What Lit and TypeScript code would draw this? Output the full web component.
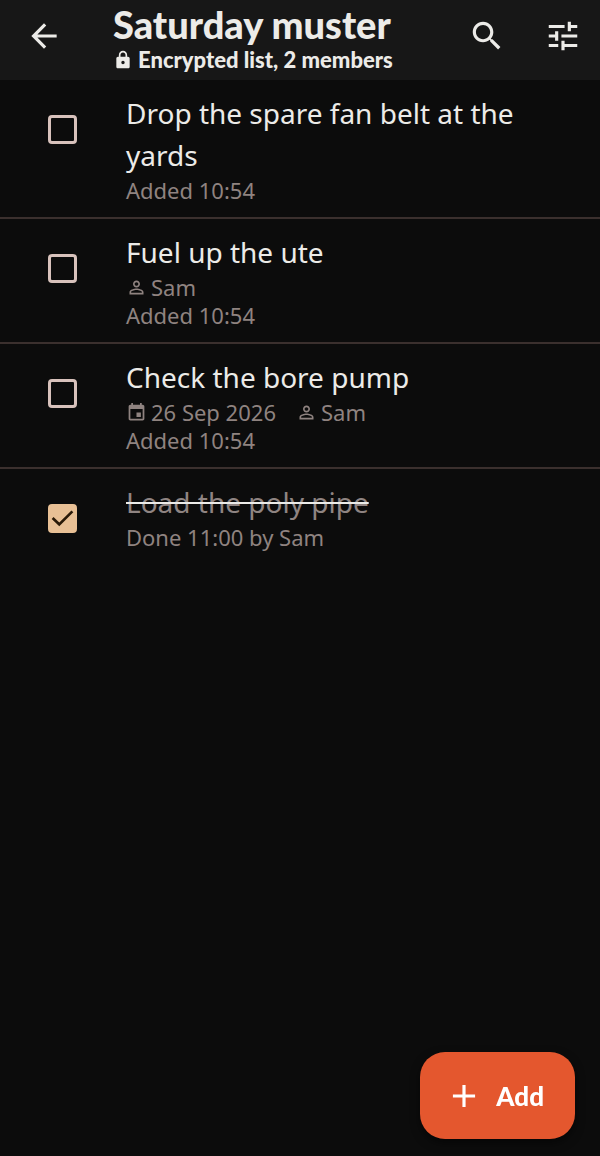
import { LitElement, html, css, svg, nothing } from "lit";
import { customElement, property } from "lit/decorators.js";

const paths = {
  back: "M20 11H7.83l5.59-5.59L12 4l-8 8 8 8 1.41-1.41L7.83 13H20v-2z",
  lock: "M18 8h-1V6c0-2.76-2.24-5-5-5S7 3.24 7 6v2H6c-1.1 0-2 .9-2 2v10c0 1.1.9 2 2 2h12c1.1 0 2-.9 2-2V10c0-1.1-.9-2-2-2zm-6 9c-1.1 0-2-.9-2-2s.9-2 2-2 2 .9 2 2-.9 2-2 2zM9 8V6c0-1.66 1.34-3 3-3s3 1.34 3 3v2H9z",
  search: "M15.5 14h-.79l-.28-.27C15.41 12.59 16 11.11 16 9.5 16 5.91 13.09 3 9.5 3S3 5.91 3 9.5 5.91 16 9.5 16c1.61 0 3.09-.59 4.23-1.57l.27.28v.79l5 4.99L20.49 19l-4.99-5zm-6 0C7.01 14 5 11.99 5 9.5S7.01 5 9.5 5 14 7.01 14 9.5 11.99 14 9.5 14z",
  tune: "M3 17v2h6v-2H3zM3 5v2h10V5H3zm10 16v-2h8v-2h-8v-2h-2v6h2zM7 9v2H3v2h4v2h2V9H7zm14 4v-2H11v2h10zm-6-4h2V7h4V5h-4V3h-2v6z",
  person: "M12 5.9c1.16 0 2.1.94 2.1 2.1s-.94 2.1-2.1 2.1S9.9 9.16 9.9 8s.94-2.1 2.1-2.1m0 9c2.97 0 6.1 1.46 6.1 2.1v1.1H5.9V17c0-.64 3.13-2.1 6.1-2.1M12 4C9.79 4 8 5.79 8 8s1.79 4 4 4 4-1.79 4-4-1.79-4-4-4zm0 9c-2.67 0-8 1.34-8 4v3h16v-3c0-2.66-5.33-4-8-4z",
  event: "M17 12h-5v5h5v-5zM16 1v2H8V1H6v2H5c-1.11 0-1.99.9-1.99 2L3 19c0 1.1.89 2 2 2h14c1.1 0 2-.9 2-2V5c0-1.1-.9-2-2-2h-1V1h-2zm3 18H5V8h14v11z",
  plus: "M19 13h-6v6h-2v-6H5v-2h6V5h2v6h6v2z",
};
type IconName = keyof typeof paths;

@customElement("ui-icon")
class UiIcon extends LitElement {
  static styles = css`
    :host { display: inline-flex; flex: none; width: 38px; height: 38px; }
    .glyph { width: 100%; height: 100%; fill: currentColor; }
  `;
  @property() name: IconName = "plus";
  render() {
    return html`<svg class="glyph" viewBox="0 0 24 24" aria-hidden="true">${svg`<path d=${paths[this.name]} />`}</svg>`;
  }
}

interface Task {
  id: string;
  title: string;
  due?: string;
  assignee?: string;
  status: string;
  done?: boolean;
}

@customElement("task-row")
class TaskRow extends LitElement {
  static styles = css`
    :host { display: block; }
    .row { display: flex; align-items: flex-start; gap: 49px; padding: 12px 49px 13px 48px; }
    .box {
      appearance: none; flex: none; box-sizing: border-box;
      display: grid; place-content: center;
      width: 29px; height: 29px; margin: 23px 0 0;
      border: 3px solid #d8c2bc; border-radius: 4px;
    }
    .box:checked { border-color: #e8c095; background: #e8c095; }
    .box:checked::before {
      content: ""; width: 23px; height: 23px; background: #2a1a08;
      clip-path: polygon(3% 52%, 11% 43%, 36% 67%, 89% 15%, 97% 23%, 36% 84%);
    }
    .body { flex: 1; min-width: 0; }
    .title { display: block; font-size: 28px; line-height: 42px; color: #ecebe8; }
    .title.done { color: #8f8482; text-decoration: line-through #ecebe8 2px; }
    .meta { display: flex; gap: 20px; margin: 0; font-size: 22px; line-height: 28px; color: #8f8380; }
    .item { display: flex; align-items: center; gap: 4px; }
    .small { width: 21px; height: 21px; }
  `;
  @property({ attribute: false }) task!: Task;
  render() {
    const t = this.task;
    return html`
      <div class="row">
        <input class="box" type="checkbox" id=${t.id} .checked=${!!t.done} />
        <div class="body">
          <label class="title ${t.done ? "done" : ""}" for=${t.id}>${t.title}</label>
          ${t.due || t.assignee
            ? html`<p class="meta">
                ${t.due ? html`<span class="item"><ui-icon class="small" name="event"></ui-icon>${t.due}</span>` : nothing}
                ${t.assignee ? html`<span class="item"><ui-icon class="small" name="person"></ui-icon>${t.assignee}</span>` : nothing}
              </p>`
            : nothing}
          <p class="meta">${t.status}</p>
        </div>
      </div>
    `;
  }
}

@customElement("app-root")
class AppRoot extends LitElement {
  static styles = css`
    :host {
      display: block; min-height: 100vh; background: #0c0c0c; color: #ecebe8;
      font-family: "Noto Sans", sans-serif;
    }
    .bar {
      display: flex; align-items: center; box-sizing: border-box; height: 80px;
      padding: 0 18px 8px 25px; background: #171717;
      font-family: Lato, sans-serif; font-weight: 900;
    }
    .tool {
      display: inline-flex; padding: 0; border: 0; background: none; color: inherit;
      cursor: pointer;
    }
    .heading { flex: 1; margin-left: 50px; padding-top: 4px; min-width: 0; }
    .name { margin: 0; font-size: 38px; line-height: 44px; font-weight: 900; white-space: nowrap; }
    .sub { display: flex; align-items: center; gap: 5px; margin: 0; font-size: 22px; line-height: 28px; }
    .lock { width: 20px; height: 20px; }
    .tools { display: flex; gap: 38px; }
    .list { margin: 0; padding: 0; list-style: none; }
    .entry + .entry { border-top: 2px solid #3b302e; }
    .add {
      position: fixed; right: 25px; bottom: 17px;
      display: flex; align-items: center; gap: 13px;
      height: 87px; padding: 0 31px 0 25px; border: 0; border-radius: 25px;
      background: #e4572e; color: #fff; cursor: pointer;
      font: 900 26px/32px Lato, sans-serif;
      box-shadow: 0 4px 10px rgba(0, 0, 0, 0.5);
    }
  `;

  private tasks: Task[] = [
    { id: "belt", title: "Drop the spare fan belt at the yards", status: "Added 10:54" },
    { id: "fuel", title: "Fuel up the ute", assignee: "Sam", status: "Added 10:54" },
    { id: "pump", title: "Check the bore pump", due: "26 Sep 2026", assignee: "Sam", status: "Added 10:54" },
    { id: "pipe", title: "Load the poly pipe", status: "Done 11:00 by Sam", done: true },
  ];

  render() {
    return html`
      <header class="bar">
        <button class="tool" aria-label="Back"><ui-icon name="back"></ui-icon></button>
        <div class="heading">
          <h1 class="name">Saturday muster</h1>
          <p class="sub"><ui-icon class="lock" name="lock"></ui-icon>Encrypted list, 2 members</p>
        </div>
        <div class="tools">
          <button class="tool" aria-label="Search"><ui-icon name="search"></ui-icon></button>
          <button class="tool" aria-label="Filter"><ui-icon name="tune"></ui-icon></button>
        </div>
      </header>
      <main>
        <ul class="list">
          ${this.tasks.map((t) => html`<li class="entry"><task-row .task=${t}></task-row></li>`)}
        </ul>
      </main>
      <button class="add"><ui-icon name="plus"></ui-icon>Add</button>
    `;
  }
}
